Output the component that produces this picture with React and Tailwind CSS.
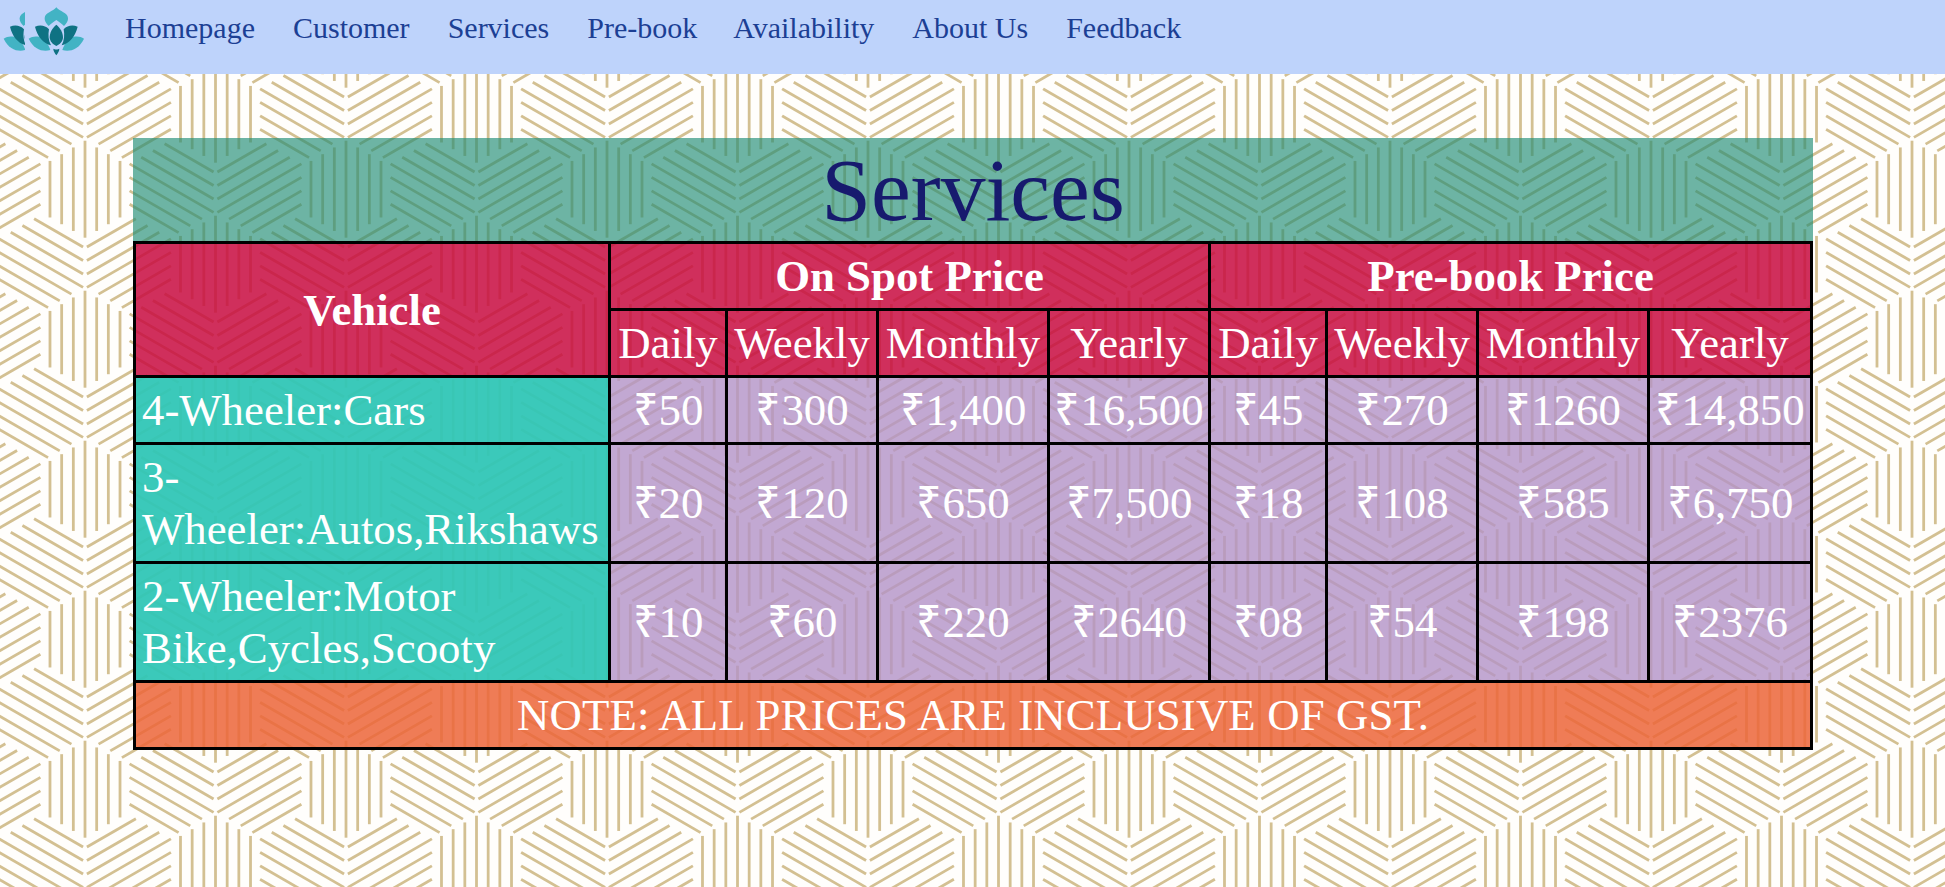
import React from "react";

const navLinks = ["Homepage", "Customer", "Services", "Pre-book", "Availability", "About Us", "Feedback"];

const rows = [
    { name: "4-Wheeler:Cars", prices: ["₹50", "₹300", "₹1,400", "₹16,500", "₹45", "₹270", "₹1260", "₹14,850"] },
    { name: "3-Wheeler:Autos,Rikshaws", prices: ["₹20", "₹120", "₹650", "₹7,500", "₹18", "₹108", "₹585", "₹6,750"] },
    { name: "2-Wheeler:Motor Bike,Cycles,Scooty", prices: ["₹10", "₹60", "₹220", "₹2640", "₹08", "₹54", "₹198", "₹2376"] },
];

const periods = ["Daily", "Weekly", "Monthly", "Yearly"];
const colWidths = [475, 117, 151, 171, 161, 117, 151, 171, 163];

const BARS = [-3, -2, -1, 0, 1, 2, 3];

// one fan of three striped groups around a junction
function Junction({ x, y }) {
    return (
        <g transform={`translate(${x} ${y})`}>
            {[0, 120, 240].map((angle) => (
                <g key={angle} transform={`rotate(${angle})`}>
                    {BARS.map((k) => (
                        <line
                            key={k}
                            x1={k * 11.67}
                            x2={k * 11.67}
                            y1={2.2 + Math.abs(k) * 6.74}
                            y2={99.2 - Math.abs(k) * 6.74}
                        />
                    ))}
                </g>
            ))}
        </g>
    );
}

function Background() {
    const offsets = [];
    [-261, 0, 261].forEach((dx) => {
        [-150, 0, 150].forEach((dy) => {
            offsets.push([85 + dx, 138.5 + dy]);
            offsets.push([215.5 + dx, 63.5 + dy]);
        });
    });
    return (
        <svg className="absolute inset-0 w-full h-full" aria-hidden="true">
            <defs>
                <pattern id="cubes" patternUnits="userSpaceOnUse" width="261" height="150">
                    <g stroke="#d3c092" strokeWidth="2.8">
                        {offsets.map(([x, y]) => (
                            <Junction key={`${x}-${y}`} x={x} y={y} />
                        ))}
                    </g>
                </pattern>
            </defs>
            <rect width="100%" height="100%" fill="#fffefc" />
            <rect width="100%" height="100%" fill="url(#cubes)" />
        </svg>
    );
}

function Lotus() {
    return (
        <>
            <path d="M169 22 C159 35 135 38 134 54 C133 62 138 70 146 78 C152 72 160 66 169 60 C178 66 186 72 192 78 C200 70 205 62 204 54 C203 38 179 35 169 22 Z" fill="#42b3c4" />
            <path d="M86 116 C98 108 114 108 126 114 C136 120 146 134 151 150 C130 156 102 150 86 116 Z" fill="#42b3c4" />
            <path d="M252 116 C240 108 224 108 212 114 C202 120 192 134 187 150 C208 156 236 150 252 116 Z" fill="#42b3c4" />
            <path d="M105 80 C120 74 136 76 147 88 C144 104 145 122 153 136 C130 130 112 110 105 80 Z" fill="#0f7283" />
            <path d="M233 80 C218 74 202 76 191 88 C194 104 193 122 185 136 C208 130 226 110 233 80 Z" fill="#0f7283" />
            <path d="M169 74 C181 84 189 98 189 112 C189 124 179 134 169 138 C159 134 149 124 149 112 C149 98 157 84 169 74 Z" fill="#0f7283" />
            <path d="M160 146 C164 149 174 149 178 146 C178 154 173 160 169 166 C165 160 160 154 160 146 Z" fill="#0f7283" />
        </>
    );
}

function Logo() {
    return (
        <svg viewBox="0 0 300 210" className="w-[100px] h-[70px] shrink-0" aria-hidden="true">
            <defs>
                <clipPath id="logo-clip">
                    <rect x="0" y="0" width="75" height="210" />
                </clipPath>
            </defs>
            <g clipPath="url(#logo-clip)">
                <g transform="translate(-75 0)">
                    <Lotus />
                </g>
            </g>
            <Lotus />
        </svg>
    );
}

export default function App() {
    const font = { fontFamily: '"Liberation Serif", "Times New Roman", serif' };
    const cell = "border-[3px] border-black px-[6px] py-[6px]";

    return (
        <div className="relative min-h-screen overflow-hidden" style={font}>
            <Background />

            <div className="relative">
                {/* Navbar */}
                <nav className="flex h-[74px] items-start bg-[#bed3fb]">
                    <Logo />
                    <ul className="ml-[6px] flex pt-[5px] text-[30px] text-[#1c3f94]">
                        {navLinks.map((link) => (
                            <li key={link} className={link === "Pre-book" ? "pl-[19px] pr-[17px]" : "px-[19px]"}>
                                <a href="#">{link}</a>
                            </li>
                        ))}
                    </ul>
                </nav>

                {/* Services table */}
                <div className="ml-[133px] mt-[64px] w-[1680px]">
                    <h1 className="bg-[#1e8c75]/65 text-center text-[89.6px] leading-[103px] text-[#171a6e]">
                        Services
                    </h1>
                    <table className="w-[1677px] table-fixed border-collapse text-center text-[44.8px] leading-[52px] text-white">
                        <colgroup>
                            {colWidths.map((w, i) => (
                                <col key={i} style={{ width: w }} />
                            ))}
                        </colgroup>
                        <thead>
                            <tr>
                                <th rowSpan="2" className={`${cell} bg-[#c80a40]/85 font-bold`}>
                                    Vehicle
                                </th>
                                <th colSpan="4" className={`${cell} bg-[#c80a40]/85 font-bold`}>
                                    On Spot Price
                                </th>
                                <th colSpan="4" className={`${cell} bg-[#c80a40]/85 font-bold`}>
                                    Pre-book Price
                                </th>
                            </tr>
                            <tr>
                                {[...periods, ...periods].map((p, i) => (
                                    <td key={i} className={`${cell} bg-[#c80a40]/85 whitespace-nowrap !px-0`}>
                                        {p}
                                    </td>
                                ))}
                            </tr>
                        </thead>
                        <tbody>
                            {rows.map((row) => (
                                <tr key={row.name}>
                                    <td className={`${cell} bg-[#30c6b6]/95 text-left`}>{row.name}</td>
                                    {row.prices.map((price, i) => (
                                        <td key={i} className={`${cell} bg-[#b392c7]/80 whitespace-nowrap !px-0`}>
                                            {price}
                                        </td>
                                    ))}
                                </tr>
                            ))}
                            <tr>
                                <td colSpan="9" className={`${cell} bg-[#ec6538]/85 tracking-[0.13px]`}>
                                    NOTE: ALL PRICES ARE INCLUSIVE OF GST.
                                </td>
                            </tr>
                        </tbody>
                    </table>
                </div>
            </div>
        </div>
    );
}
